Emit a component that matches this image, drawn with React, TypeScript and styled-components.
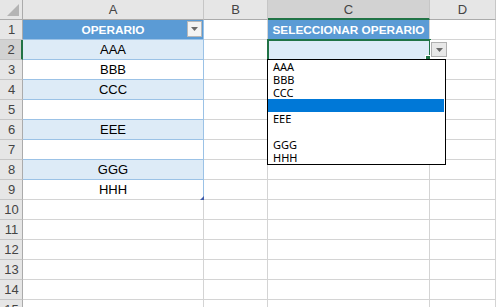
import styled, { createGlobalStyle } from 'styled-components'

const GlobalStyle = createGlobalStyle`
  html, body {
    margin: 0;
    padding: 0;
    background: #fff;
    overflow: hidden;
  }
  body {
    font-family: "Liberation Sans", Arial, sans-serif;
  }
`

const Sheet = styled.div`
  display: grid;
  grid-template-columns: 23px 181px 64px 162px 66px;
  grid-auto-rows: 20px;
  width: 496px;
  height: 307px;
  overflow: hidden;
`

const Corner = styled.div`
  background: #e6e6e6;
  border-right: 1px solid #ababab;
  border-bottom: 1px solid #ababab;
  display: flex;
  align-items: flex-end;
  justify-content: flex-end;
  padding: 0 3px 3px 0;
`

const ColHead = styled.div<{ $active?: boolean }>`
  background: ${p => (p.$active ? '#d2d2d2' : '#e6e6e6')};
  border-right: 1px solid #c6c6c6;
  border-bottom: ${p => (p.$active ? '2px solid #217346' : '1px solid #ababab')};
  color: #444;
  font-size: 13px;
  display: flex;
  align-items: center;
  justify-content: center;
  padding-top: ${p => (p.$active ? '1px' : '0')};
`

const RowHead = styled.div<{ $active?: boolean }>`
  background: ${p => (p.$active ? '#d2d2d2' : '#e6e6e6')};
  border-right: ${p => (p.$active ? '2px solid #217346' : '1px solid #ababab')};
  border-bottom: 1px solid #c6c6c6;
  color: #444;
  font-size: 13px;
  display: flex;
  align-items: center;
  justify-content: center;
  padding-left: 1px;
`

const Cell = styled.div<{ $bg?: string; $line?: string; $edge?: string; $head?: boolean }>`
  position: relative;
  background: ${p => p.$bg || '#fff'};
  border-right: 1px solid ${p => p.$edge || '#d4d4d4'};
  border-bottom: 1px solid ${p => p.$line || '#d4d4d4'};
  color: ${p => (p.$head ? '#fff' : '#000')};
  font-weight: ${p => (p.$head ? 700 : 400)};
  font-size: ${p => (p.$head ? '11.8px' : '13px')};
  display: flex;
  align-items: center;
  justify-content: center;
  white-space: nowrap;
`

const FilterButton = styled.div`
  position: absolute;
  right: 1px;
  top: 1px;
  width: 15px;
  height: 16px;
  box-sizing: border-box;
  background: #f3f3f3;
  border: 1px solid #b8b8b8;
  display: flex;
  align-items: center;
  justify-content: center;
`

const TableCorner = styled.div`
  position: absolute;
  right: -1px;
  bottom: -1px;
  width: 0;
  height: 0;
  border-left: 4px solid transparent;
  border-bottom: 4px solid #3d5aa8;
`

const Selection = styled.div`
  position: absolute;
  left: -1px;
  top: -1px;
  right: -2px;
  bottom: -2px;
  border: 2px solid #217346;
  pointer-events: none;
`

const FillHandle = styled.div`
  position: absolute;
  right: -3px;
  bottom: -3px;
  width: 5px;
  height: 5px;
  background: #217346;
  border: 1px solid #fff;
`

const DropButton = styled.div`
  position: absolute;
  left: 163px;
  top: 2px;
  width: 16px;
  height: 15px;
  box-sizing: border-box;
  background: #e8e8e8;
  border: 1px solid #b1b1b1;
  display: flex;
  align-items: center;
  justify-content: center;
  z-index: 2;
`

const ListBox = styled.ul`
  position: absolute;
  left: -1px;
  top: 19px;
  width: 179px;
  box-sizing: border-box;
  margin: 0;
  padding: 0;
  list-style: none;
  background: #fff;
  border: 1px solid #000;
  z-index: 3;
`

const ListItem = styled.li<{ $selected?: boolean }>`
  height: 13px;
  line-height: 13px;
  padding-left: 5px;
  font-family: "Noto Sans", "Open Sans", sans-serif;
  font-size: 11px;
  color: #000;
  overflow: hidden;
  background: ${p => (p.$selected ? '#0078d7' : 'transparent')};
  margin-right: ${p => (p.$selected ? '1px' : '0')};
`

const Arrow = ({ color = '#6a6a6a' }: { color?: string }) => (
  <svg width="7" height="4" viewBox="0 0 7 4">
    <path d="M0 0 H7 L3.5 4 Z" fill={color} />
  </svg>
)

const operarios = ['AAA', 'BBB', 'CCC', '', 'EEE', '', 'GGG', 'HHH']
const columns = ['A', 'B', 'C', 'D']

const App = () => {
  const rows = Array.from({ length: 15 }, (_, i) => i + 1)

  return (
    <>
      <GlobalStyle />
      <Sheet>
        <Corner>
          <svg width="12" height="12" viewBox="0 0 12 12">
            <path d="M12 0 V12 H0 Z" fill="#b4b4b4" />
          </svg>
        </Corner>
        {columns.map(c => (
          <ColHead key={c} $active={c === 'C'}>{c}</ColHead>
        ))}

        {rows.map(r => {
          const inTable = r >= 2 && r <= 9
          const band = inTable && r % 2 === 0
          const tableLine = r >= 1 && r <= 8 ? '#9bc2e6' : undefined
          return [
            <RowHead key={`h${r}`} $active={r === 2}>{r}</RowHead>,
            r === 1 ? (
              <Cell key={`a${r}`} $bg="#5b9bd5" $head $edge="#9bc2e6" $line="#9bc2e6">
                OPERARIO
                <FilterButton><Arrow /></FilterButton>
              </Cell>
            ) : (
              <Cell
                key={`a${r}`}
                $bg={band ? '#ddebf7' : '#fff'}
                $edge={inTable ? '#9bc2e6' : undefined}
                $line={inTable && r < 9 ? tableLine : r === 9 ? '#d4d4d4' : undefined}
              >
                {inTable ? operarios[r - 2] : ''}
                {r === 9 && <TableCorner />}
              </Cell>
            ),
            <Cell key={`b${r}`} />,
            r === 1 ? (
              <Cell key={`c${r}`} $bg="#5b9bd5" $head>SELECCIONAR OPERARIO</Cell>
            ) : r === 2 ? (
              <Cell key={`c${r}`} $bg="#ddebf7">
                <Selection />
                <FillHandle />
                <DropButton><Arrow /></DropButton>
                <ListBox>
                  {operarios.map((o, i) => (
                    <ListItem key={i} $selected={i === 3}>{o || '\u00a0'}</ListItem>
                  ))}
                </ListBox>
              </Cell>
            ) : (
              <Cell key={`c${r}`} />
            ),
            <Cell key={`d${r}`} />,
          ]
        })}
      </Sheet>
    </>
  )
}

export default App
